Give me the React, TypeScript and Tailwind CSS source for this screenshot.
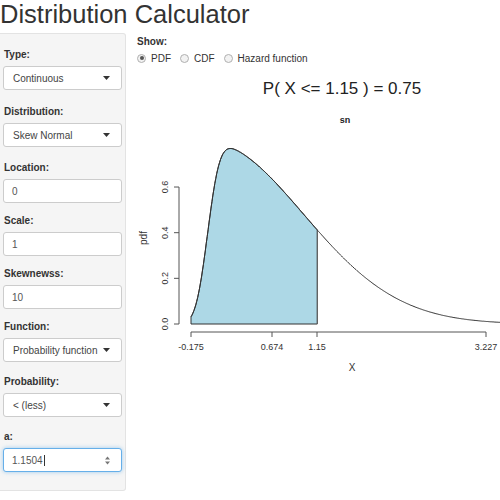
import React from "react";

// skew normal density, location 0, scale 1, shape 10
function erf(x: number) {
	const s = x < 0 ? -1 : 1;
	const a = Math.abs(x);
	const t = 1 / (1 + 0.3275911 * a);
	const y =
		1 -
		((((1.061405429 * t - 1.453152027) * t + 1.421413741) * t - 0.284496736) * t +
			0.254829592) *
			t *
			Math.exp(-a * a);
	return s * y;
}

function sn(x: number) {
	const dens = Math.exp((-x * x) / 2) / Math.sqrt(2 * Math.PI);
	const cdf = 0.5 * (1 + erf((10 * x) / Math.SQRT2));
	return 2 * dens * cdf;
}

const X0 = 191;
const XS = 95.3;
const Y0 = 324;
const YS = 228.3;
const px = (x: number) => X0 + (x + 0.175) * XS;
const py = (y: number) => Y0 - y * YS;

function curvePoints(from: number, to: number) {
	const pts: string[] = [];
	for (let x = from; x < to; x += 0.01) {
		pts.push(`${px(x).toFixed(1)},${py(sn(x)).toFixed(1)}`);
	}
	pts.push(`${px(to).toFixed(1)},${py(sn(to)).toFixed(1)}`);
	return pts;
}

function Caret() {
	return (
		<svg width="7" height="4" viewBox="0 0 7 4">
			<path d="M0 0 L7 0 L3.5 4 Z" fill="#333" />
		</svg>
	);
}

function SelectBox({ value }: { value: string }) {
	return (
		<div className="h-[24px] border border-[#cccccc] rounded-[3px] bg-white flex items-center justify-between pl-[9px] pr-[11px] text-[10px] text-[#444]">
			<span>{value}</span>
			<Caret />
		</div>
	);
}

function TextBox({ value }: { value: string }) {
	return (
		<div className="h-[24px] border border-[#cccccc] rounded-[3px] bg-white flex items-center pl-[8px] text-[10px] text-[#555]">
			{value}
		</div>
	);
}

function Label({ text }: { text: string }) {
	return <div className="h-[14px] leading-[14px] text-[10px] font-bold text-[#333] pl-[1px] mb-[4px]">{text}</div>;
}

function Radio({ label, checked }: { label: string; checked?: boolean }) {
	return (
		<div className="flex items-center mr-[9px]">
			<div className="w-[9px] h-[9px] rounded-full border border-[#b0b0b0] bg-[#f2f2f2] flex items-center justify-center">
				{checked && <div className="w-[4px] h-[4px] rounded-full bg-[#555]" />}
			</div>
			<span className="ml-[5px] text-[10px] text-[#333]">{label}</span>
		</div>
	);
}

export default function App() {
	const full = curvePoints(-0.175, 3.6).join(" ");
	const fill = [...curvePoints(-0.175, 1.1504), `${px(1.1504).toFixed(1)},${Y0}`, `${px(-0.175).toFixed(1)},${Y0}`].join(" ");

	const xTicks = [
		{ x: 191, label: "-0.175" },
		{ x: 272, label: "0.674" },
		{ x: 317, label: "1.15" },
		{ x: 486, label: "3.227" },
	];
	const yTicks = [0, 0.2, 0.4, 0.6];

	return (
		<div className="w-[500px] h-[500px] bg-white overflow-hidden font-['Liberation_Sans',Arial,sans-serif]">
			<h2 className="text-[25.5px] leading-[28px] text-[#333] h-[33px]">Distribution Calculator</h2>
			<div className="flex">
				{/* sidebar */}
				<div className="w-[126px] shrink-0 bg-[#f5f5f5] border-t border-r border-b border-[#e3e3e3] rounded-r-[3px] pt-[14px] pb-[18px] pl-[3px] pr-[3px]">
					<Label text="Type:" />
					<SelectBox value="Continuous" />
					<div className="mt-[15px]">
						<Label text="Distribution:" />
						<SelectBox value="Skew Normal" />
					</div>
					<div className="mt-[14px]">
						<Label text="Location:" />
						<TextBox value="0" />
					</div>
					<div className="mt-[11px]">
						<Label text="Scale:" />
						<TextBox value="1" />
					</div>
					<div className="mt-[11px]">
						<Label text="Skewnewss:" />
						<TextBox value="10" />
					</div>
					<div className="mt-[11px]">
						<Label text="Function:" />
						<SelectBox value="Probability function" />
					</div>
					<div className="mt-[13px]">
						<Label text="Probability:" />
						<SelectBox value="< (less)" />
					</div>
					<div className="mt-[13px]">
						<Label text="a:" />
						<div className="h-[24px] border border-[#66afe9] rounded-[3px] bg-white flex items-center justify-between pl-[8px] pr-[11px] text-[10px] text-[#555] shadow-[0_0_4px_rgba(102,175,233,0.6)]">
							<span className="flex items-center">
								1.1504
								<span className="w-px h-[11px] bg-[#333] ml-[1px]" />
							</span>
							<svg width="5" height="9" viewBox="0 0 5 9">
								<path d="M0 3.5 L5 3.5 L2.5 0.5 Z" fill="#777" />
								<path d="M0 5.5 L5 5.5 L2.5 8.5 Z" fill="#777" />
							</svg>
						</div>
					</div>
				</div>

				{/* main */}
				<div className="w-[363px] ml-[11px]">
					<div className="mt-[2px] h-[14px] leading-[14px] text-[10px] font-bold text-[#333]">Show:</div>
					<div className="mt-[2px] h-[14px] flex items-center">
						<Radio label="PDF" checked />
						<Radio label="CDF" />
						<Radio label="Hazard function" />
					</div>
					<div className="mt-[14px] h-[20px] leading-[20px] text-[17px] text-[#222] text-center pl-[47px]">
						P( X &lt;= 1.15 ) = 0.75
					</div>
					<svg width="363" height="300" viewBox="137 99 363 300" className="block">
						<text x="345" y="123" textAnchor="middle" fontSize="9" fontWeight="bold" fill="#222">
							sn
						</text>
						<polygon points={fill} fill="#add8e6" stroke="#333" strokeWidth="1" />
						<line x1={px(1.1504)} y1={Y0} x2={px(1.1504)} y2={py(sn(1.1504))} stroke="#666" strokeWidth="1" />
						<polyline points={full} fill="none" stroke="#333" strokeWidth="1" />

						{/* y axis */}
						<line x1="179" y1={py(0)} x2="179" y2={py(0.6)} stroke="#555" strokeWidth="1" />
						{yTicks.map((v) => (
							<g key={v}>
								<line x1="174" y1={py(v)} x2="179" y2={py(v)} stroke="#555" strokeWidth="1" />
								<text
									transform={`translate(168, ${py(v)}) rotate(-90)`}
									textAnchor="middle"
									fontSize="9"
									fill="#333"
								>
									{v.toFixed(1)}
								</text>
							</g>
						))}
						<text transform="translate(147, 238) rotate(-90)" textAnchor="middle" fontSize="10" fill="#333">
							pdf
						</text>

						{/* x axis */}
						<line x1="191" y1="332" x2="486" y2="332" stroke="#555" strokeWidth="1" />
						{xTicks.map((t) => (
							<g key={t.label}>
								<line x1={t.x} y1="332" x2={t.x} y2="337" stroke="#555" strokeWidth="1" />
								<text x={t.x} y="350" textAnchor="middle" fontSize="9" fill="#333">
									{t.label}
								</text>
							</g>
						))}
						<text x="352" y="371" textAnchor="middle" fontSize="10" fill="#333">
							X
						</text>
					</svg>
				</div>
			</div>
		</div>
	);
}
